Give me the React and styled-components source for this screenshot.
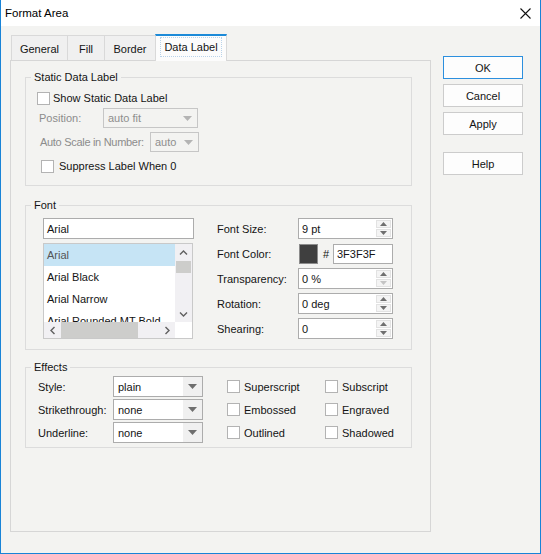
import React from "react";
import styled, { createGlobalStyle } from "styled-components";

const GlobalStyle = createGlobalStyle`
  body {
    margin: 0;
    background: #f3f3f1;
  }
  * {
    box-sizing: border-box;
  }
`;

const fonts = [
  "Arial",
  "Arial Black",
  "Arial Narrow",
  "Arial Rounded MT Bold",
];

function Triangle({ down = true, color = "#6a6a6a", w = 9, h = 5 }) {
  const pts = down ? `0,0 ${w},0 ${w / 2},${h}` : `0,${h} ${w},${h} ${w / 2},0`;
  return (
    <svg width={w} height={h} viewBox={`0 0 ${w} ${h}`}>
      <polygon points={pts} fill={color} />
    </svg>
  );
}

function Chevron({ dir }) {
  const pts = {
    up: "1,5.5 4.5,2 8,5.5",
    down: "1,2.5 4.5,6 8,2.5",
    left: "5.5,1 2,4.5 5.5,8",
    right: "2.5,1 6,4.5 2.5,8",
  }[dir];
  const vertical = dir === "up" || dir === "down";
  return (
    <svg width={vertical ? 9 : 8} height={vertical ? 8 : 9} viewBox={vertical ? "0 0 9 8" : "0 0 8 9"}>
      <polyline points={pts} fill="none" stroke="#606060" strokeWidth="1.4" />
    </svg>
  );
}

function Spinner({ value, downDisabled }) {
  return (
    <SpinBox>
      <SpinValue>{value}</SpinValue>
      <SpinButtons>
        <SpinHalf>
          <Triangle down={false} w={7} h={4} color="#6f6f6f" />
        </SpinHalf>
        <SpinHalf>
          <Triangle w={7} h={4} color={downDisabled ? "#c4c4c4" : "#6f6f6f"} />
        </SpinHalf>
      </SpinButtons>
    </SpinBox>
  );
}

function Dropdown({ value, width, disabled }) {
  return (
    <SelectBox $w={width} $disabled={disabled}>
      <SelectValue $disabled={disabled}>{value}</SelectValue>
      <SelectArrow $disabled={disabled}>
        <Triangle color={disabled ? "#b4b4b4" : "#6e6e6e"} />
      </SelectArrow>
    </SelectBox>
  );
}

function Check({ label, ml, gap = 4, mt }) {
  return (
    <CheckRow $ml={ml} $gap={gap} $mt={mt}>
      <CheckBox />
      <span>{label}</span>
    </CheckRow>
  );
}

export default function App() {
  return (
    <>
      <GlobalStyle />
      <Window>
        <TitleBar>
          <Title>Format Area</Title>
          <svg width="11" height="11" viewBox="0 0 11 11">
            <path d="M0.5 0.5 L10.5 10.5 M10.5 0.5 L0.5 10.5" stroke="#111" strokeWidth="1.1" />
          </svg>
        </TitleBar>
        <Body>
          <LeftCol>
            <TabRow>
              <Tab $w={57}>General</Tab>
              <Tab $w={38}>Fill</Tab>
              <Tab $w={52}>Border</Tab>
              <Tab $w={72} $active>
                <FocusRing>Data Label</FocusRing>
              </Tab>
            </TabRow>
            <Panel>
              <Group $pad="10px 0 9px 0">
                <GroupTitle>Static Data Label</GroupTitle>
                <Check label="Show Static Data Label" ml={11} gap={3} $tight />
                <FieldRow $ml={13}>
                  <DimLabel $w={64}>Position:</DimLabel>
                  <Dropdown value="auto fit" width={95} disabled />
                </FieldRow>
                <FieldRow $ml={14} $mt={4}>
                  <DimLabel $w={110} $tight>Auto Scale in Number:</DimLabel>
                  <Dropdown value="auto" width={49} disabled />
                </FieldRow>
                <Check label="Suppress Label When 0" ml={15} mt={4} gap={5} />
              </Group>

              <Group $mt={19} $pad="12px 0 10px 17px">
                <GroupTitle>Font</GroupTitle>
                <FontLayout>
                  <FontPicker>
                    <TextBox $w={151}>Arial</TextBox>
                    <ListBox>
                      <ListItems>
                        {fonts.map((f, i) => (
                          <ListItem key={f} $selected={i === 0}>
                            {f}
                          </ListItem>
                        ))}
                      </ListItems>
                      <VScroll>
                        <ScrollBtn>
                          <Chevron dir="up" />
                        </ScrollBtn>
                        <VThumb />
                        <ScrollFill />
                        <ScrollBtn>
                          <Chevron dir="down" />
                        </ScrollBtn>
                      </VScroll>
                      <HScroll>
                        <ScrollBtn>
                          <Chevron dir="left" />
                        </ScrollBtn>
                        <HThumb />
                        <ScrollFill />
                        <ScrollBtn>
                          <Chevron dir="right" />
                        </ScrollBtn>
                      </HScroll>
                      <Corner />
                    </ListBox>
                  </FontPicker>
                  <PropGrid>
                    <Label>Font Size:</Label>
                    <Spinner value="9 pt" />
                    <Label>Font Color:</Label>
                    <ColorRow>
                      <Swatch />
                      <Hash>#</Hash>
                      <TextBox $w={60} $h={20}>3F3F3F</TextBox>
                    </ColorRow>
                    <Label>Transparency:</Label>
                    <Spinner value="0 %" downDisabled />
                    <Label>Rotation:</Label>
                    <Spinner value="0 deg" />
                    <Label>Shearing:</Label>
                    <Spinner value="0" />
                  </PropGrid>
                </FontLayout>
              </Group>

              <Group $mt={17} $pad="8px 0 4px 12px">
                <GroupTitle>Effects</GroupTitle>
                <EffectsGrid>
                  <Label>Style:</Label>
                  <Dropdown value="plain" width={90} />
                  <Check label="Superscript" />
                  <Check label="Subscript" />
                  <Label>Strikethrough:</Label>
                  <Dropdown value="none" width={90} />
                  <Check label="Embossed" />
                  <Check label="Engraved" />
                  <Label>Underline:</Label>
                  <Dropdown value="none" width={90} />
                  <Check label="Outlined" />
                  <Check label="Shadowed" />
                </EffectsGrid>
              </Group>
            </Panel>
          </LeftCol>
          <ButtonCol>
            <Button $primary>OK</Button>
            <Button>Cancel</Button>
            <Button>Apply</Button>
            <Button $mt={12}>Help</Button>
          </ButtonCol>
        </Body>
      </Window>
    </>
  );
}

const Window = styled.div`
  width: 541px;
  height: 554px;
  display: flex;
  flex-direction: column;
  background: #f3f3f1;
  border: 1px solid #1883d7;
  border-top: none;
  font-family: "Liberation Sans", Arial, sans-serif;
  font-size: 11px;
  color: #141414;
`;

const TitleBar = styled.div`
  height: 26px;
  flex-shrink: 0;
  background: #ffffff;
  display: flex;
  align-items: center;
  justify-content: space-between;
  padding: 0 9px 0 4px;
`;

const Title = styled.span`
  font-size: 11.5px;
  color: #000;
`;

const Body = styled.div`
  flex: 1;
  display: flex;
  padding: 8px 0 0 9px;
`;

const LeftCol = styled.div`
  width: 421px;
  display: flex;
  flex-direction: column;
`;

const TabRow = styled.div`
  height: 26px;
  display: flex;
  align-items: flex-end;
  padding-left: 1px;
`;

const Tab = styled.div`
  width: ${(p) => p.$w}px;
  height: ${(p) => (p.$active ? 27 : 25)}px;
  margin-right: -1px;
  margin-bottom: ${(p) => (p.$active ? -1 : 0)}px;
  position: relative;
  z-index: ${(p) => (p.$active ? 1 : 0)};
  display: flex;
  align-items: ${(p) => (p.$active ? "flex-start" : "center")};
  justify-content: center;
  padding-top: 1px;
  background: ${(p) => (p.$active ? "#fcfcfc" : "#f0f0f0")};
  border: 1px solid #d9d9d9;
  border-bottom: none;
  border-top: ${(p) => (p.$active ? "2px solid #1c8ad8" : "1px solid #d9d9d9")};
  color: #141414;
`;

const FocusRing = styled.span`
  width: 62px;
  height: 20px;
  display: flex;
  align-items: center;
  justify-content: center;
  border: 1px dotted #b9d3ea;
`;

const Panel = styled.div`
  height: 472px;
  border: 1px solid #d6d6d6;
  padding: 16px 18px 0 14px;
  display: flex;
  flex-direction: column;
`;

const Group = styled.div`
  position: relative;
  margin-top: ${(p) => p.$mt || 0}px;
  border: 1px solid #dcdcdc;
  padding: ${(p) => p.$pad};
  display: flex;
  flex-direction: column;
`;

const GroupTitle = styled.span`
  position: absolute;
  top: -9px;
  left: 5px;
  padding: 0 3px;
  line-height: 16px;
  background: #f3f3f1;
  color: #141414;
`;

const CheckRow = styled.div`
  height: 20px;
  margin-left: ${(p) => p.$ml || 0}px;
  margin-top: ${(p) => p.$mt || 0}px;
  display: flex;
  align-items: center;
  gap: ${(p) => p.$gap}px;
  white-space: nowrap;
`;

const CheckBox = styled.span`
  width: 13px;
  height: 13px;
  flex-shrink: 0;
  border: 1px solid #b3b3b3;
  background: #ffffff;
`;

const FieldRow = styled.div`
  height: 20px;
  margin-left: ${(p) => p.$ml || 0}px;
  margin-top: ${(p) => p.$mt || 0}px;
  display: flex;
  align-items: center;
`;

const Label = styled.span`
  display: flex;
  align-items: center;
  white-space: nowrap;
`;

const DimLabel = styled(Label)`
  width: ${(p) => p.$w}px;
  color: #8c8c8c;
  letter-spacing: ${(p) => (p.$tight ? "-0.3px" : "0")};
`;

const SelectBox = styled.div`
  width: ${(p) => p.$w}px;
  height: ${(p) => (p.$disabled ? 20 : 21)}px;
  display: flex;
  border: 1px solid ${(p) => (p.$disabled ? "#c6c6c6" : "#acacac")};
  background: ${(p) => (p.$disabled ? "transparent" : "#ffffff")};
`;

const SelectValue = styled.span`
  flex: 1;
  display: flex;
  align-items: center;
  padding-left: 4px;
  color: ${(p) => (p.$disabled ? "#8e8e8e" : "#141414")};
`;

const SelectArrow = styled.span`
  width: 19px;
  display: flex;
  align-items: center;
  justify-content: center;
  background: ${(p) => (p.$disabled ? "transparent" : "#f0f0f0")};
`;

const FontLayout = styled.div`
  display: flex;
  gap: 23px;
`;

const FontPicker = styled.div`
  display: flex;
  flex-direction: column;
  gap: 4px;
`;

const TextBox = styled.div`
  width: ${(p) => p.$w}px;
  height: ${(p) => p.$h || 21}px;
  border: 1px solid #acacac;
  background: #ffffff;
  display: flex;
  align-items: center;
  padding-left: 3px;
`;

const ListBox = styled.div`
  width: 150px;
  height: 96px;
  border: 1px solid #c9c9c9;
  background: #ffffff;
  display: grid;
  grid-template-columns: 1fr 17px;
  grid-template-rows: 1fr 16px;
`;

const ListItems = styled.div`
  overflow: hidden;
`;

const ListItem = styled.div`
  height: 22px;
  display: flex;
  align-items: center;
  padding-left: 3px;
  white-space: nowrap;
  background: ${(p) => (p.$selected ? "#c6e4f5" : "transparent")};
  color: ${(p) => (p.$selected ? "#555555" : "#141414")};
`;

const VScroll = styled.div`
  display: flex;
  flex-direction: column;
  background: #f1f0f3;
`;

const HScroll = styled.div`
  display: flex;
  background: #f1f0f3;
`;

const ScrollBtn = styled.span`
  width: 17px;
  height: 17px;
  flex-shrink: 0;
  display: flex;
  align-items: center;
  justify-content: center;
  ${HScroll} & {
    height: 16px;
  }
`;

const ScrollFill = styled.span`
  flex: 1;
`;

const VThumb = styled.span`
  height: 12px;
  margin: 0 1px;
  background: #cdcdcb;
`;

const HThumb = styled.span`
  width: 77px;
  background: #cdcdcb;
`;

const Corner = styled.span`
  background: #ffffff;
`;

const PropGrid = styled.div`
  display: grid;
  grid-template-columns: 81px 95px;
  grid-auto-rows: 21px;
  row-gap: 4px;
`;

const SpinBox = styled.div`
  display: flex;
  border: 1px solid #acacac;
  background: #ffffff;
`;

const SpinValue = styled.span`
  flex: 1;
  display: flex;
  align-items: center;
  padding-left: 3px;
`;

const SpinButtons = styled.span`
  width: 15px;
  margin: 1px 1px 1px 0;
  display: flex;
  flex-direction: column;
  gap: 1px;
`;

const SpinHalf = styled.span`
  flex: 1;
  display: flex;
  align-items: center;
  justify-content: center;
  background: #f4f4f4;
  border: 1px solid #e2e2e2;
`;

const ColorRow = styled.div`
  display: flex;
  align-items: center;
`;

const Swatch = styled.span`
  width: 19px;
  height: 20px;
  margin-left: 1px;
  background: #3f3f3f;
  border: 1px solid #8c8c8c;
`;

const Hash = styled.span`
  width: 15px;
  padding-left: 5px;
`;

const EffectsGrid = styled.div`
  display: grid;
  grid-template-columns: 75px 114px 98px 1fr;
  grid-auto-rows: 21px;
  row-gap: 2px;
  align-items: center;
`;

const ButtonCol = styled.div`
  display: flex;
  flex-direction: column;
  gap: 5px;
  padding-top: 22px;
  margin-left: 12px;
`;

const Button = styled.div`
  width: 80px;
  height: 23px;
  margin-top: ${(p) => p.$mt || 0}px;
  display: flex;
  align-items: center;
  justify-content: center;
  background: #fdfdfd;
  border: 1px solid ${(p) => (p.$primary ? "#2c8fde" : "#cccccc")};
  color: #141414;
`;
